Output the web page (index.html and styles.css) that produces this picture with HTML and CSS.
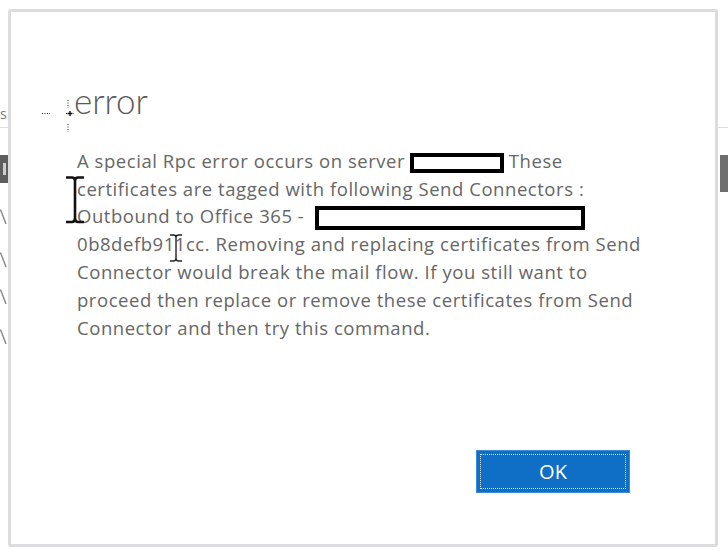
FILE: index.html
```html
<!DOCTYPE html>
<html lang="en">
<head>
    <meta charset="UTF-8">
    <title>error</title>
    <link rel="stylesheet" href="styles.css">
</head>
<body>
    <div class="side side-left">
        <div class="s-letter">s</div>
        <div class="rule"></div>
        <div class="head-block"><span class="head-mark"></span></div>
        <div class="slash slash-1"><svg width="8" height="16" viewBox="0 0 8 16"><path d="M0.5 0.5 L6 15" stroke="#888" stroke-width="1.4" fill="none"/></svg></div>
        <div class="slash slash-2"><svg width="8" height="16" viewBox="0 0 8 16"><path d="M0.5 0.5 L6 15" stroke="#888" stroke-width="1.4" fill="none"/></svg></div>
        <div class="slash slash-3"><svg width="8" height="16" viewBox="0 0 8 16"><path d="M0.5 0.5 L6 15" stroke="#888" stroke-width="1.4" fill="none"/></svg></div>
        <div class="slash slash-4"><svg width="8" height="16" viewBox="0 0 8 16"><path d="M0.5 0.5 L6 15" stroke="#888" stroke-width="1.4" fill="none"/></svg></div>
    </div>

    <div class="dialog">
        <h1 class="dialog-title">error</h1>
        <p class="dialog-text">
            A special Rpc error occurs on server <span class="redact redact-server"></span> These<br>
            certificates are tagged with following Send Connectors :<br>
            Outbound to Office 365 - <span class="redact redact-connector"></span><br>
            0b8defb911cc. Removing and replacing certificates from Send<br>
            Connector would break the mail flow. If you still want to<br>
            proceed then replace or remove these certificates from Send<br>
            Connector and then try this command.
        </p>
        <div class="dialog-footer">
            <button class="ok-button">OK</button>
        </div>

        <!-- mouse cursors caught in the screenshot -->
        <svg class="cursor cursor-move" width="34" height="36" viewBox="0 0 34 36">
            <path d="M27 2 V10 M27 26 V34 M1 15.5 H9 M25 15.5 H33" stroke="#222" stroke-width="1" stroke-dasharray="1 1.5" fill="none"/>
            <path d="M29 13 V18 M26.5 15.5 H31.5" stroke="#111" stroke-width="1.4" fill="none"/>
        </svg>
        <svg class="cursor cursor-ibeam-big" width="22" height="48" viewBox="0 0 22 48">
            <path d="M1 1.5 H7 Q10 1.5 10 5 V42 Q10 46 7 46 H1 M19 1.5 H13 Q10 1.5 10 5 M10 42 Q10 46 13 46 H19" stroke="#111" stroke-width="2.6" fill="none"/>
        </svg>
        <svg class="cursor cursor-ibeam-small" width="14" height="28" viewBox="0 0 14 28">
            <path d="M1 1 H4.5 Q7 1 7 3.5 V24 Q7 27 4.5 27 H1 M13 1 H9.5 Q7 1 7 3.5 M7 24 Q7 27 9.5 27 H13" stroke="#222" stroke-width="1.4" fill="none"/>
        </svg>
    </div>

    <div class="side side-right">
        <div class="rule rule-right"></div>
        <div class="thumb"></div>
    </div>
</body>
</html>
```

FILE: styles.css
```css
html, body {
    margin: 0;
    padding: 0;
}
body {
    width: 728px;
    height: 553px;
    overflow: hidden;
    background: #fff;
    display: flex;
    font-family: "Open Sans", "Liberation Sans", sans-serif;
}

/* page behind the dialog, peeking out at the edges */
.side {
    flex-shrink: 0;
    overflow: hidden;
}
.side-left {
    width: 8px;
}
.side-right {
    flex: 1;
}
.s-letter {
    margin-top: 104px;
    height: 20px;
    line-height: 20px;
    font-size: 14px;
    color: #777;
}
.rule {
    margin-top: 3px;
    height: 1px;
    background: #dedede;
}
.rule-right {
    margin-top: 127px;
}
.head-block {
    margin-top: 27px;
    height: 28px;
    background: #5e5e5e;
    display: flex;
    align-items: center;
}
.head-mark {
    display: block;
    width: 3px;
    height: 12px;
    margin-left: 3px;
    background: #cfcfcf;
}
.slash {
    height: 16px;
}
.slash-1 { margin-top: 25px; }
.slash-2 { margin-top: 27px; }
.slash-3 { margin-top: 21px; }
.slash-4 { margin-top: 24px; }
.thumb {
    margin-top: 27px;
    margin-left: 2px;
    height: 37px;
    background: #6e6e6e;
}

/* dialog */
.dialog {
    position: relative;
    flex-shrink: 0;
    box-sizing: border-box;
    width: 710px;
    height: 538px;
    margin-top: 9px;
    border: 3px solid #dcdcdf;
    border-radius: 3px;
    background: #fff;
    display: flex;
    flex-direction: column;
    padding-top: 68px;
}
.dialog-title {
    margin: 0;
    padding-left: 63px;
    font-family: Lato, "Open Sans", sans-serif;
    font-size: 35px;
    font-weight: 300;
    line-height: 40px;
    color: #5a5a5a;
}
.dialog-text {
    margin: 27px 0 0 0;
    padding-left: 66px;
    font-size: 18.5px;
    letter-spacing: 0.55px;
    line-height: 27.7px;
    color: #666;
    white-space: nowrap;
}
.redact {
    display: inline-block;
    box-sizing: border-box;
    border: 4px solid #000;
    background: #fff;
    vertical-align: middle;
}
.redact-server {
    width: 94px;
    height: 20px;
    margin-left: -1px;
}
.redact-connector {
    width: 270px;
    height: 24px;
    margin-left: 5px;
}
.dialog-footer {
    margin-top: auto;
    display: flex;
    justify-content: flex-end;
    padding: 0 85px 51px 0;
}
.ok-button {
    width: 154px;
    height: 43px;
    border: 1px solid #3a8ad6;
    background: #0f6fc6;
    color: #fff;
    font-family: "Open Sans", "Liberation Sans", sans-serif;
    font-size: 20px;
    outline: 1px dotted #d7e6f6;
    outline-offset: -5px;
    cursor: pointer;
}

.cursor {
    position: absolute;
}
.cursor-move {
    left: 30px;
    top: 86px;
}
.cursor-ibeam-big {
    left: 54px;
    top: 164px;
}
.cursor-ibeam-small {
    left: 158px;
    top: 222px;
}
```
